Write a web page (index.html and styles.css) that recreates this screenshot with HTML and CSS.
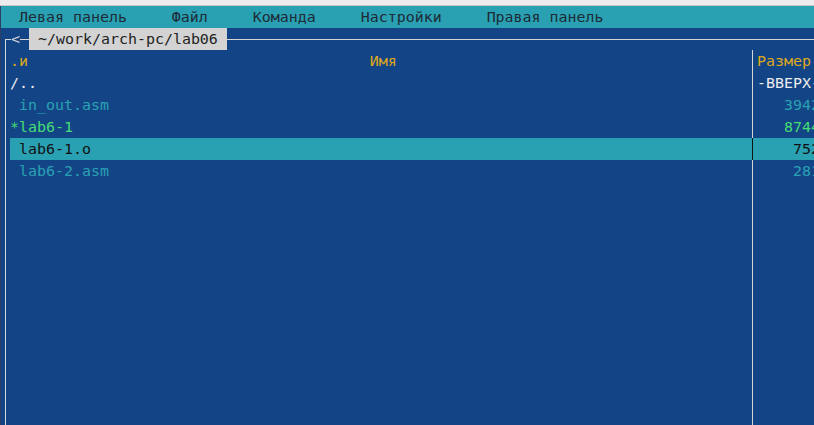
FILE: index.html
```html
<!DOCTYPE html>
<html lang="ru">
<head>
<meta charset="utf-8">
<title>mc</title>
<link rel="stylesheet" href="styles.css">
</head>
<body>
<div class="chrome"></div>
<div class="term">
  <div class="menubar">  Левая панель     Файл     Команда     Настройки     Правая панель</div>
  <div class="title-row">
    <div class="corner"></div>
    <div class="lt">&lt;</div>
    <div class="hline short"></div>
    <div class="path"> ~/work/arch-pc/lab06 </div>
    <div class="hline grow"></div>
  </div>
  <div class="panel-body">
    <div class="row">
      <div class="name hdr">.и                                      Имя</div>
      <div class="sep"></div>
      <div class="size hdr">Размер </div>
    </div>
    <div class="row">
      <div class="name white">/..</div>
      <div class="sep"></div>
      <div class="size white">-ВВЕРХ-</div>
    </div>
    <div class="row">
      <div class="name cyan"> in_out.asm</div>
      <div class="sep"></div>
      <div class="size cyan">   3942</div>
    </div>
    <div class="row">
      <div class="name green">*lab6-1</div>
      <div class="sep"></div>
      <div class="size green">   8744</div>
    </div>
    <div class="row selected">
      <div class="name"> lab6-1.o</div>
      <div class="sep"></div>
      <div class="size">    752</div>
    </div>
    <div class="row">
      <div class="name cyan"> lab6-2.asm</div>
      <div class="sep"></div>
      <div class="size cyan">    281</div>
    </div>
    <div class="row filler">
      <div class="name"></div>
      <div class="sep"></div>
      <div class="size"></div>
    </div>
  </div>
</div>
</body>
</html>
```
FILE: styles.css
```css
html, body {
  margin: 0;
  padding: 0;
  height: 100%;
  overflow: hidden;
}
body {
  display: flex;
  flex-direction: column;
  background: #134586;
  font-family: "DejaVu Sans Mono", monospace;
  font-size: 14.95px;
  line-height: 22px;
}
.chrome {
  height: 5px;
  background: #ededed;
  border-bottom: 1px solid #c8c8c8;
  flex: none;
}
.term {
  flex: 1;
  display: flex;
  flex-direction: column;
  border-left: 1px solid #2c3d66;
  min-height: 0;
}
.menubar {
  height: 22px;
  background: #2aa1b3;
  color: #1d2b36;
  white-space: pre;
  flex: none;
}
.title-row {
  height: 22px;
  display: flex;
  flex: none;
}
.corner {
  width: 5px;
  margin-left: 4px;
  margin-top: 11px;
  border-top: 1px solid #d6d6d6;
  border-left: 1px solid #d6d6d6;
}
.lt {
  width: 9px;
  color: #d6d6d6;
  white-space: pre;
}
.hline {
  height: 11px;
  border-bottom: 1px solid #d6d6d6;
}
.hline.short {
  width: 9px;
}
.hline.grow {
  flex: 1;
}
.path {
  background: #d3d3d3;
  color: #222;
  white-space: pre;
}
.panel-body {
  flex: 1;
  display: flex;
  flex-direction: column;
  margin-left: 4px;
  padding-left: 4px;
  border-left: 1px solid #d6d6d6;
  min-height: 0;
}
.row {
  display: grid;
  grid-template-columns: 738px 9px 63px;
  height: 22px;
  flex: none;
}
.row.filler {
  flex: 1;
  height: auto;
}
.name, .size {
  white-space: pre;
}
.name {
  overflow: hidden;
}
.sep {
  background: linear-gradient(#d6d6d6, #d6d6d6) no-repeat 4px 0 / 1px 100%;
}
.hdr { color: #dfa81c; }
.white { color: #ececec; }
.cyan { color: #2aa1b3; }
.green { color: #45dc74; }
.row.selected {
  background: #2aa1b3;
  color: #111;
}
.row.selected .sep {
  background: linear-gradient(#111, #111) no-repeat 4px 0 / 1px 100%;
}
```
